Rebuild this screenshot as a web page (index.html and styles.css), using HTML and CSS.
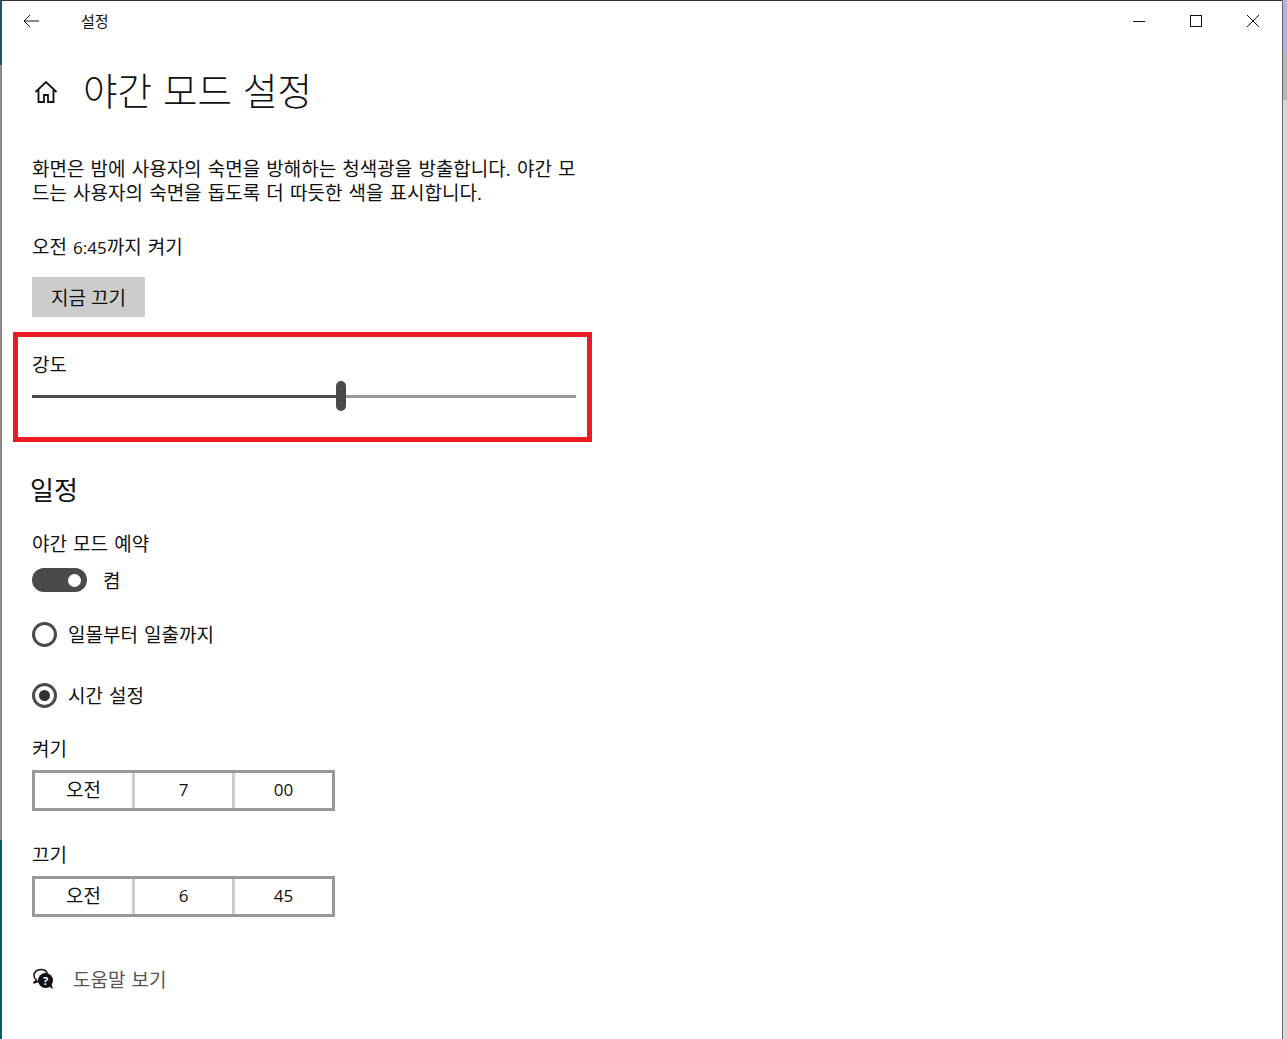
FILE: index.html
```html
<!DOCTYPE html>
<html lang="ko">
<head>
    <meta charset="UTF-8">
    <title>설정</title>
    <link rel="stylesheet" href="styles.css">
</head>
<body>
    <div class="desktop">
        <div class="edge-left">
            <div class="edge-teal-top"></div>
            <div class="edge-grey"></div>
            <div class="edge-teal-bottom"></div>
        </div>
        <div class="window">
            <div class="titlebar">
                <div class="titlebar-left">
                    <svg class="back-icon" width="16" height="14" viewBox="0 0 16 14"><path d="M7 1 1 7l6 6M1 7h15" fill="none" stroke="#111" stroke-width="1"/></svg>
                    <span class="app-name">설정</span>
                </div>
                <div class="window-controls">
                    <svg width="12" height="12" viewBox="0 0 12 12"><path d="M0 6.5h12" stroke="#111" stroke-width="1"/></svg>
                    <svg width="12" height="12" viewBox="0 0 12 12"><rect x=".5" y=".5" width="11" height="11" fill="none" stroke="#111"/></svg>
                    <svg width="12" height="12" viewBox="0 0 12 12"><path d="M0 0l12 12M12 0 0 12" stroke="#111" stroke-width="1"/></svg>
                </div>
            </div>

            <div class="content">
                <div class="page-title">
                    <svg class="home-icon" width="24" height="24" viewBox="0 0 24 24"><path d="M1.5 12 12 2l10.500 10M4.500 10v12h5.500v-7h4v7h5.500V10" fill="none" stroke="#111" stroke-width="1.800"/></svg>
                    <h1>야간 모드 설정</h1>
                </div>

                <p class="description">화면은 밤에 사용자의 숙면을 방해하는 청색광을 방출합니다. 야간 모<br>드는 사용자의 숙면을 돕도록 더 따듯한 색을 표시합니다.</p>
                <p class="status">오전 <span class="num">6:45</span>까지 켜기</p>
                <button class="off-button">지금 끄기</button>

                <div class="highlight-box">
                    <div class="label">강도</div>
                    <div class="slider">
                        <div class="slider-fill"></div>
                        <div class="slider-thumb"></div>
                        <div class="slider-rest"></div>
                    </div>
                </div>

                <h2>일정</h2>
                <div class="label schedule-label">야간 모드 예약</div>
                <div class="toggle-row">
                    <div class="toggle"><div class="toggle-knob"></div></div>
                    <span>켬</span>
                </div>
                <div class="radio-row first-radio">
                    <div class="radio"></div>
                    <span>일몰부터 일출까지</span>
                </div>
                <div class="radio-row second-radio">
                    <div class="radio checked"></div>
                    <span>시간 설정</span>
                </div>

                <div class="label time-label">켜기</div>
                <div class="time-picker">
                    <div class="time-cell">오전</div>
                    <div class="time-cell num">7</div>
                    <div class="time-cell num">00</div>
                </div>

                <div class="label time-label off-label">끄기</div>
                <div class="time-picker">
                    <div class="time-cell">오전</div>
                    <div class="time-cell num">6</div>
                    <div class="time-cell num">45</div>
                </div>

                <div class="help-row">
                    <svg width="22" height="22" viewBox="0 0 22 22">
                        <path d="M9 1.500c-4 0-7 2.500-7 6 0 2 1 3.500 2.500 4.500L1.500 15l5-1.500" fill="#fff" stroke="#111" stroke-width="1.500"/>
                        <path d="M9 1.500c3 0 5.500 1.500 6.500 4" fill="none" stroke="#111" stroke-width="1.500"/>
                        <circle cx="13.500" cy="12.500" r="7.500" fill="#111"/>
                        <path d="M16 18l5 3-2-6z" fill="#111"/>
                        <text class="help-mark" x="13.500" y="16.500" text-anchor="middle">?</text>
                    </svg>
                    <span>도움말 보기</span>
                </div>
            </div>
        </div>
        <div class="edge-right">
            <div class="edge-purple"></div>
            <div class="edge-mid"></div>
            <div class="edge-light"></div>
        </div>
    </div>
</body>
</html>
```

FILE: styles.css
```css
html, body {
    margin: 0;
    padding: 0;
    height: 100%;
    overflow: hidden;
}

body {
    font-family: "Open Sans", "Noto Sans CJK KR", sans-serif;
    font-size: 19px;
    word-spacing: 1.2px;
    color: #111;
    background-color: #fff;
}

.num {
    font-size: 17px;
}

.desktop {
    display: flex;
    height: 1039px;
}

/* Slivers of the desktop visible around the window */
.edge-left {
    width: 2px;
    display: flex;
    flex-direction: column;
    background-color: #8a8a8a;
}

.edge-teal-top {
    height: 65px;
    background-color: #22525f;
}

.edge-grey {
    flex-grow: 1;
}

.edge-teal-bottom {
    height: 199px;
    background-color: #0b5a6b;
}

.edge-right {
    width: 5px;
    display: flex;
    flex-direction: column;
    border-left: 1px solid #666;
    box-sizing: border-box;
    background-color: #d8d8d8;
}

.edge-purple {
    height: 54px;
    background-color: #bfaedb;
}

.edge-mid {
    height: 46px;
    background-color: #b5b5b5;
}

.edge-light {
    flex-grow: 1;
}

.window {
    flex-grow: 1;
    border-top: 1px solid #333;
    background-color: #fff;
}

.titlebar {
    display: flex;
    justify-content: space-between;
    align-items: center;
    height: 40px;
}

.titlebar-left {
    display: flex;
    align-items: center;
    padding-left: 21px;
}

.back-icon {
    margin-right: 42px;
}

.app-name {
    margin-bottom: 2px;
    font-size: 15px;
}

.window-controls {
    display: flex;
    gap: 45px;
    padding-right: 23px;
}

.content {
    padding-left: 30px;
}

.page-title {
    display: flex;
    align-items: center;
    gap: 25px;
    margin-top: 23px;
    height: 50px;
}

.home-icon {
    margin-top: 6px;
    margin-left: 2px;
}

h1 {
    margin: 4px 0 0;
    font-size: 37.5px;
    font-weight: 300;
    line-height: 50px;
}

.description {
    width: 560px;
    margin: 43px 0 0;
    line-height: 24px;
}

.status {
    margin: 30px 0 0;
    line-height: 24px;
}

.off-button {
    display: block;
    width: 113px;
    height: 40px;
    margin-top: 17px;
    padding: 0;
    border: none;
    font: inherit;
    color: #111;
    background-color: #ccc;
}

.highlight-box {
    width: 579px;
    height: 110px;
    margin: 15px 0 0 -19px;
    padding: 16px 0 0 14px;
    border: 5px solid #ed1c24;
    box-sizing: border-box;
}

.label {
    line-height: 24px;
}

.slider {
    display: flex;
    align-items: center;
    width: 544px;
    height: 30px;
    margin-top: 4px;
}

.slider-fill {
    width: 304px;
    height: 3px;
    background-color: #4c4a48;
}

.slider-thumb {
    width: 10px;
    height: 30px;
    border-radius: 5px;
    background-color: #4c4a48;
}

.slider-rest {
    flex-grow: 1;
    height: 3px;
    background-color: #999;
}

h2 {
    margin: 31px 0 0 -2px;
    font-size: 26px;
    font-weight: 400;
    line-height: 34px;
}

.schedule-label {
    margin-top: 25px;
}

.toggle-row {
    display: flex;
    align-items: center;
    gap: 16px;
    margin-top: 10px;
}

.toggle {
    display: flex;
    align-items: center;
    justify-content: flex-end;
    width: 55px;
    height: 24px;
    padding-right: 6px;
    border-radius: 12px;
    box-sizing: border-box;
    background-color: #4c4a48;
}

.toggle-knob {
    width: 13px;
    height: 13px;
    border-radius: 50%;
    background-color: #fff;
}

.radio-row {
    display: flex;
    align-items: center;
    gap: 11px;
    height: 26px;
}

.first-radio {
    margin-top: 27px;
}

.second-radio {
    margin-top: 35px;
}

.radio {
    display: flex;
    align-items: center;
    justify-content: center;
    width: 25px;
    height: 25px;
    border: 3px solid #4c4a48;
    border-radius: 50%;
    box-sizing: border-box;
}

.radio.checked::after {
    content: "";
    width: 11px;
    height: 11px;
    border-radius: 50%;
    background-color: #333;
}

.time-label {
    margin-top: 29px;
}

.off-label {
    margin-top: 32px;
}

.time-picker {
    display: grid;
    grid-template-columns: 97px 100px 1fr;
    width: 303px;
    height: 41px;
    margin-top: 9px;
    border: 3px solid #999;
    box-sizing: border-box;
}

.time-cell {
    display: flex;
    align-items: center;
    justify-content: center;
    padding-bottom: 4px;
    border-left: 3px solid #ccc;
}

.time-cell.num {
    padding-bottom: 2px;
}

.time-cell:first-child {
    border-left: none;
}

.help-row {
    display: flex;
    align-items: center;
    gap: 19px;
    margin-top: 48px;
    color: #555;
}

.help-mark {
    font-size: 11px;
    font-weight: 700;
    fill: #fff;
}
```
